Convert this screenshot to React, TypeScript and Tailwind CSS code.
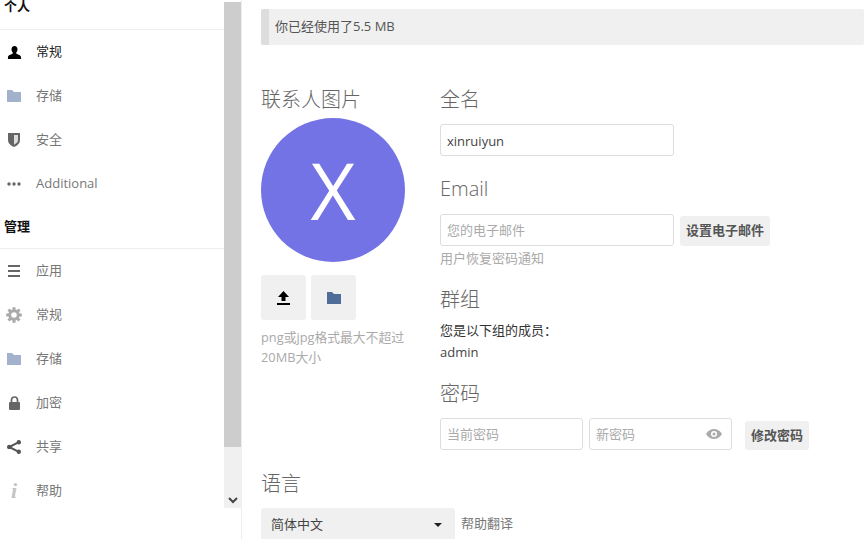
import React from "react";

const font = { fontFamily: '"Open Sans","Noto Sans CJK SC",sans-serif' };

function UserIcon() {
  return (
    <svg width="15" height="15" viewBox="0 0 16 16" fill="#000">
      <path d="M8 1C6 1 4.800 2.600 4.800 4.600c0 1.300.5 2.600 1.300 3.400.3.500.2 1.100-.3 1.400C4 10.300 1 11 1 13.500V15h14v-1.500c0-2.500-3-3.200-4.800-4.100-.5-.3-.6-.9-.3-1.400.8-.8 1.300-2.100 1.300-3.400C11.200 2.600 10 1 8 1z" />
    </svg>
  );
}
function FolderIcon({ color }: { color: string }) {
  return (
    <svg width="14" height="12" viewBox="0 0 14 12" fill={color}>
      <path d="M0 0h5l2 2h7v10H0z" />
    </svg>
  );
}
function ShieldIcon() {
  return (
    <svg width="12" height="14" viewBox="0 0 12 14">
      <path d="M0 0h12v7c0 3.500-3 5.800-6 7-3-1.200-6-3.500-6-7z" fill="#666" />
      <path d="M6 2h4v5c0 2.200-1.800 3.700-4 4.700z" fill="#ddd" />
    </svg>
  );
}
function DotsIcon() {
  return (
    <svg width="14" height="4" viewBox="0 0 14 4" fill="#666">
      <circle cx="2" cy="2" r="1.700" />
      <circle cx="7" cy="2" r="1.700" />
      <circle cx="12" cy="2" r="1.700" />
    </svg>
  );
}
function MenuIcon() {
  return (
    <svg width="12" height="12" viewBox="0 0 12 12" fill="#666">
      <rect y="0" width="12" height="2" />
      <rect y="5" width="12" height="2" />
      <rect y="10" width="12" height="2" />
    </svg>
  );
}
function GearIcon() {
  return (
    <svg width="16" height="16" viewBox="0 0 16 16">
      <g fill="#aaa">
        {[0, 45, 90, 135, 180, 225, 270, 315].map((a) => (
          <rect key={a} x="6.500" y="0.200" width="3" height="4" transform={`rotate(${a} 8 8)`} />
        ))}
      </g>
      <circle cx="8" cy="8" r="4.300" fill="none" stroke="#aaa" strokeWidth="3" />
    </svg>
  );
}
function LockIcon() {
  return (
    <svg width="11" height="14" viewBox="0 0 11 14">
      <path d="M2.500 7V4a3 3 0 0 1 6 0v3" fill="none" stroke="#666" strokeWidth="1.700" />
      <rect x="0" y="6" width="11" height="8" rx="1" fill="#666" />
    </svg>
  );
}
function ShareIcon() {
  return (
    <svg width="14" height="14" viewBox="0 0 14 14" fill="#555">
      <circle cx="11.800" cy="2.200" r="2.200" />
      <circle cx="2.200" cy="7" r="2.200" />
      <circle cx="11.800" cy="11.800" r="2.200" />
      <path d="M11.800 2.200 2.200 7l9.600 4.800" fill="none" stroke="#555" strokeWidth="2" />
    </svg>
  );
}
function InfoIcon() {
  return (
    <span className="text-[22px] font-bold italic leading-none text-[#c4c4c4]" style={{ fontFamily: '"Liberation Serif",serif' }}>
      i
    </span>
  );
}

function NavRow({ icon, label, active }: { icon: React.ReactNode; label: string; active?: boolean }) {
  return (
    <div className="flex h-[44px] items-center">
      <span className="flex w-[28px] justify-center">{icon}</span>
      <span className={`ml-[8px] text-[13px] ${active ? "text-[#222]" : "text-[#777]"}`}>{label}</span>
    </div>
  );
}

function Title({ children }: { children: React.ReactNode }) {
  return <h2 className="text-[20px] font-light leading-[28px] text-[#666]">{children}</h2>;
}

const inputCls =
  "h-[32px] rounded-[3px] border border-[#dddddd] bg-white px-[6px] text-[13px] text-[#444] outline-none placeholder:text-[#aaa]";

export default function App() {
  return (
    <div className="flex h-[539px] w-[864px] overflow-hidden bg-white" style={font}>
      <aside className="flex w-[242px] shrink-0 border-r border-[#eeeeee]">
        <div className="-mt-[14px] w-[224px]">
          <div className="flex h-[44px] items-center border-b border-[#eeeeee] pb-[1px] pl-[4px] text-[13px] font-bold text-[#111]">
            个人
          </div>
          <NavRow active icon={<UserIcon />} label="常规" />
          <NavRow icon={<FolderIcon color="#a2b2cc" />} label="存储" />
          <NavRow icon={<ShieldIcon />} label="安全" />
          <NavRow icon={<DotsIcon />} label="Additional" />
          <div className="flex h-[43px] items-center border-b border-[#eeeeee] pl-[4px] text-[13px] font-bold text-[#111]">
            管理
          </div>
          <NavRow icon={<MenuIcon />} label="应用" />
          <NavRow icon={<GearIcon />} label="常规" />
          <NavRow icon={<FolderIcon color="#a2b2cc" />} label="存储" />
          <NavRow icon={<LockIcon />} label="加密" />
          <NavRow icon={<ShareIcon />} label="共享" />
          <NavRow icon={<InfoIcon />} label="帮助" />
        </div>
        <div className="mt-[2px] flex h-[506px] w-[17px] flex-col bg-[#f0f0f0]">
          <div className="h-[445px] bg-[#cdcdcd]" />
          <div className="flex flex-1 items-end justify-center pb-[4px]">
            <svg width="10" height="7" viewBox="0 0 10 7" fill="none" stroke="#444" strokeWidth="2">
              <path d="M1 1l4 4 4-4" />
            </svg>
          </div>
        </div>
      </aside>

      <main className="flex-1 pl-[19px] pt-[9px]">
        <div className="flex h-[36px] items-center rounded-[2px] border-l-[8px] border-[#dddddd] bg-[#f0f0f0] pl-[6px] text-[13px] text-[#555]">
          你已经使用了5.5 MB
        </div>

        <div className="mt-[41px] flex">
          <section className="w-[179px]">
            <Title>联系人图片</Title>
            <div className="mt-[4px] flex h-[144px] w-[144px] items-center justify-center rounded-full bg-[#7373e6] text-[78px] font-normal leading-none text-white">
              X
            </div>
            <div className="mt-[13px] flex gap-[5px]">
              <div className="flex h-[45px] w-[45px] items-center justify-center rounded-[3px] bg-[#f0f0f0]">
                <svg width="13" height="14" viewBox="0 0 13 14" fill="#000">
                  <path d="M6.500 0 12 6H8.500v4h-4V6H1zM0 12h13v2H0z" />
                </svg>
              </div>
              <div className="flex h-[45px] w-[45px] items-center justify-center rounded-[3px] bg-[#f0f0f0]">
                <FolderIcon color="#4f6d98" />
              </div>
            </div>
            <p className="mt-[7px] text-[12.8px] leading-[20px] text-[#aaa]">
              png或jpg格式最大不超过
              <br />
              20MB大小
            </p>
          </section>

          <section className="flex-1">
            <Title>全名</Title>
            <input className={`${inputCls} mt-[10px] block w-[234px] pt-[2px]`} defaultValue="xinruiyun" />
            <div className="mt-[19px]">
              <Title>Email</Title>
            </div>
            <div className="mt-[11px] flex items-end gap-[6px]">
              <input className={`${inputCls} w-[234px]`} placeholder="您的电子邮件" />
              <button className="h-[30px] rounded-[3px] bg-[#f0f0f0] px-[6px] text-[13px] font-bold text-[#555]">
                设置电子邮件
              </button>
            </div>
            <p className="mt-[2px] text-[13px] leading-[20px] text-[#aaa]">用户恢复密码通知</p>
            <div className="mt-[18px]">
              <Title>群组</Title>
            </div>
            <p className="mt-[6px] text-[13px] leading-[21px] text-[#333]">您是以下组的成员：</p>
            <p className="mt-[1px] text-[13px] leading-[21px] text-[#444]">admin</p>
            <div className="mt-[17px]">
              <Title>密码</Title>
            </div>
            <div className="mt-[10px] flex items-end">
              <input className={`${inputCls} w-[143px]`} placeholder="当前密码" />
              <div className="relative ml-[6px]">
                <input className={`${inputCls} block w-[143px]`} placeholder="新密码" />
                <svg className="absolute right-[10px] top-[10px]" width="16" height="12" viewBox="0 0 16 12">
                  <path d="M0 6c2-3.500 5-5 8-5s6 1.500 8 5c-2 3.500-5 5-8 5S2 9.500 0 6z" fill="#aaa" />
                  <circle cx="8" cy="6" r="3" fill="#fff" />
                  <circle cx="8" cy="6" r="1.500" fill="#aaa" />
                </svg>
              </div>
              <button className="ml-[13px] h-[29px] rounded-[3px] bg-[#f0f0f0] px-[6px] text-[13px] font-bold text-[#555]">
                修改密码
              </button>
            </div>
          </section>
        </div>

        <div className="pt-[20px]">
          <Title>语言</Title>
          <div className="mt-[10px] flex items-center">
            <div className="flex h-[32px] w-[194px] items-center justify-between rounded-[3px] bg-[#f0f0f0] pl-[10px] pr-[13px] pt-[1px] text-[13px] text-[#444]">
              简体中文
              <span className="h-0 w-0 border-x-[4px] border-t-[4px] border-x-transparent border-t-[#222]" />
            </div>
            <span className="ml-[6px] text-[13px] text-[#777]">帮助翻译</span>
          </div>
        </div>
      </main>
    </div>
  );
}
